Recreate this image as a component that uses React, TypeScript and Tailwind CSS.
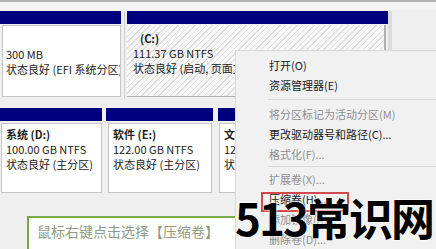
import React from "react";

const Blue = ({ w }: { w: string }) => <div className={`h-[13px] bg-[#00007f] ${w}`} />;

function MenuItem({ label, disabled, boxed }: { label: string; disabled?: boolean; boxed?: boolean }) {
  return (
    <div className="relative h-[20px] flex items-center pl-[33px]">
      {boxed && <div className="absolute left-[25px] top-[3px] w-[88px] h-[20px] border-2 border-[#d24a4a]" />}
      <span className={disabled ? "text-[#8e8e8e]" : "text-[#1a1a1a]"}>{label}</span>
    </div>
  );
}

function Sep({ h }: { h: string }) {
  return (
    <div className={`${h} flex items-center pl-[32px]`}>
      <div className="h-px w-full bg-[#d9d9d9]" />
    </div>
  );
}

export default function App() {
  return (
    <div className="relative w-[436px] h-[249px] overflow-hidden bg-[#f0eff0] font-['Noto_Sans_CJK_SC',sans-serif] text-[11px] leading-[15px] text-[#222]">
      <div className="h-[2px] bg-[#b4b4b4]" />
      <div className="h-[8px] bg-[#f5f5f6]" />
      {/* top disk row */}
      <div className="flex pt-px">
        <div className="w-[122px] flex flex-col">
          <Blue w="w-[121px]" />
          <div className="ml-[2px] mt-px w-[119px] h-[72px] bg-white border border-[#c4c4c4] pt-[6px] pl-[3px] whitespace-nowrap overflow-hidden">
            <div className="h-[15px]" />
            <div>300 MB</div>
            <div>状态良好 (EFI 系统分区)</div>
          </div>
        </div>
        <div className="w-[5px] flex justify-center">
          <div className="w-px h-[88px] bg-[#d0d0d0]" />
        </div>
        <div className="w-[265px] h-[88px] flex flex-col border-r-[4px] border-[#dcdcdc]">
          <Blue w="w-[261px]" />
          <div className="mt-px w-[259px] h-[72px] border-r-2 border-b border-[#b0b0b0] bg-[repeating-linear-gradient(135deg,#dedede_0px,#dedede_1px,#f7f7f7_1px,#f7f7f7_4px)] pt-[6px] pl-[6px] whitespace-nowrap overflow-hidden">
            <div className="font-bold pl-[7px]">(C:)</div>
            <div>111.37 GB NTFS</div>
            <div>状态良好 (启动, 页面文件, 故障转储, 主分区)</div>
          </div>
        </div>
      </div>
      <div className="h-[9px]" />
      {/* second disk row */}
      <div className="flex">
        <div className="w-[103px] flex flex-col">
          <Blue w="w-[102px]" />
          <div className="ml-[1px] mt-[2px] w-[101px] h-[70px] bg-white border border-[#c4c4c4] pt-[3px] pl-[4px] whitespace-nowrap overflow-hidden">
            <div className="font-bold">系统 (D:)</div>
            <div>100.00 GB NTFS</div>
            <div>状态良好 (主分区)</div>
          </div>
        </div>
        <div className="w-[3px]" />
        <div className="w-[108px] flex flex-col">
          <Blue w="w-[107px]" />
          <div className="ml-[2px] mt-[2px] w-[104px] h-[70px] bg-white border border-[#c4c4c4] pt-[3px] pl-[4px] whitespace-nowrap overflow-hidden">
            <div className="font-bold">软件 (E:)</div>
            <div>122.00 GB NTFS</div>
            <div>状态良好 (主分区)</div>
          </div>
        </div>
        <div className="w-[4px]" />
        <div className="w-[120px] flex flex-col">
          <Blue w="w-[120px]" />
          <div className="ml-[1px] mt-[2px] w-[119px] h-[70px] bg-white border border-[#c4c4c4] pt-[3px] pl-[4px] whitespace-nowrap overflow-hidden">
            <div className="font-bold">文档 (F:)</div>
            <div>123.00 GB NTFS</div>
            <div>状态良好 (主分区)</div>
          </div>
        </div>
      </div>
      {/* green label */}
      <div className="mt-[23px] ml-[27px] w-[210px] h-[40px] border-2 border-[#77a84a] bg-white pl-[8px] pt-[5px] font-['Liberation_Serif','Noto_Sans_CJK_SC',serif] text-[14px] leading-[20px] text-[#8f9c80] whitespace-nowrap">
        鼠标右键点击选择【压缩卷】
      </div>

      {/* context menu */}
      <div className="absolute left-[235px] top-[50px] w-[210px] h-[210px] bg-[#f2f1f2] border-l border-t border-[#dadada] pt-[4px]">
        <MenuItem label="打开(O)" />
        <MenuItem label="资源管理器(E)" />
        <Sep h="h-[9px]" />
        <MenuItem label="将分区标记为活动分区(M)" disabled />
        <MenuItem label="更改驱动器号和路径(C)..." />
        <MenuItem label="格式化(F)..." disabled />
        <Sep h="h-[5px]" />
        <MenuItem label="扩展卷(X)..." disabled />
        <MenuItem label="压缩卷(H)..." boxed />
        <MenuItem label="添加镜像(A)..." disabled />
        <MenuItem label="删除卷(D)..." disabled />
      </div>

      {/* watermark */}
      <div className="absolute left-[235px] top-[190px] font-['Noto_Sans_CJK_SC',sans-serif] font-bold text-[44px] leading-[54px] tracking-[-2px] text-black whitespace-nowrap [text-shadow:0_0_2px_#fff,0_0_2px_#fff]">
        513常识网
      </div>
    </div>
  );
}
